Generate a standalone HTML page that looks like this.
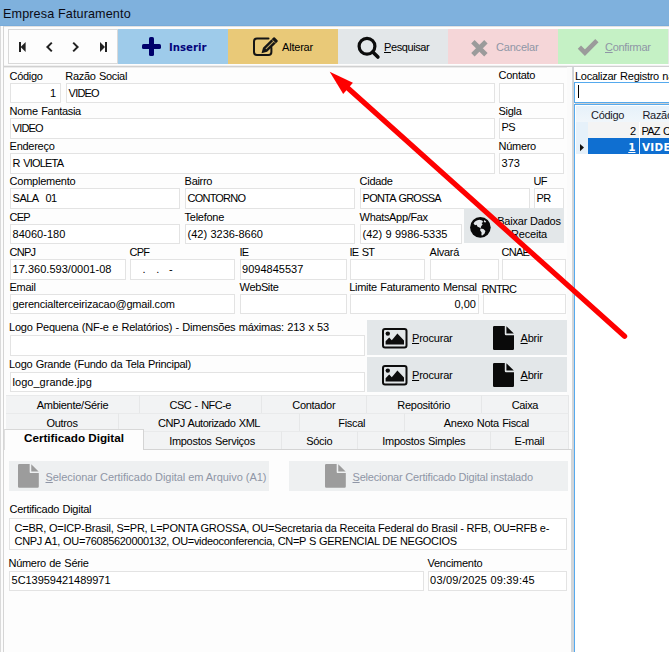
<!DOCTYPE html>
<html><head><meta charset="utf-8"><title>Empresa Faturamento</title>
<style>
*{box-sizing:border-box;margin:0;padding:0}
html,body{width:669px;height:652px;overflow:hidden;background:#fdfdfd}
body{position:relative;font-family:"Liberation Sans",sans-serif;font-size:11px;color:#000;letter-spacing:-0.2px}
.a{position:absolute}
.l{position:absolute;white-space:nowrap;line-height:13px;height:13px}
.i{position:absolute;height:20.5px;background:#fff;border:1px solid #e3e3e3;white-space:nowrap;line-height:15px;padding:1px 0 0 1.6px;overflow:hidden}
.btn{position:absolute;top:29px;height:35px;width:110px}
.bt{position:absolute;white-space:nowrap;line-height:13px;top:41px}
.t{position:absolute;white-space:nowrap;height:18.4px;line-height:18px;text-align:center;border-right:1px solid #e6e7e8;border-top:1px solid #e9eaeb;background:#f2f3f4}
u{text-decoration-thickness:1px;text-underline-offset:1px}
svg{position:absolute;overflow:visible}
</style></head><body>

<div class="a" style="left:0;top:0;width:669px;height:26px;background:#7fb1dd"></div>
<div class="l" style="left:3px;top:7px;font-size:12.6px;line-height:15px;height:15px;letter-spacing:0.13px;color:#0a0a14">Empresa Faturamento</div>
<div class="a" style="left:0;top:26px;width:5px;height:626px;background:linear-gradient(90deg,#dadada 0,#dadada 1px,#fcfcfc 1px,#fcfcfc 3px,#d5d5d5 3px,#d5d5d5 4px,#f2f2f2 4px,#f2f2f2 4.4px,#fdfdfd 4.4px)"></div>
<div class="a" style="left:4px;top:26px;width:665px;height:40px;background:#fdfdfd"></div>
<div class="a" style="left:8px;top:29px;width:110px;height:35px;background:#fdfdfd;border:1px solid #d9d9d9"></div>
<div class="btn" style="left:118px;background:#9ecbea"></div>
<div class="btn" style="left:228px;background:#e9c978"></div>
<div class="btn" style="left:338px;background:#e3e7e9"></div>
<div class="btn" style="left:448px;background:#f5d6d8"></div>
<div class="btn" style="left:558px;width:110px;background:#c5f1c5"></div>
<div class="a" style="left:668px;top:29px;width:1px;height:35px;background:#e6e6e6"></div>
<div class="a" style="left:0;top:25px;width:669px;height:1px;background:#78abd9"></div>
<div class="a" style="left:4px;top:26px;width:665px;height:1px;background:#e2e2e2"></div>
<div class="a" style="left:4px;top:65px;width:665px;height:3px;background:linear-gradient(#f0f0f0 0,#f0f0f0 1px,#d0d0d0 1px,#d0d0d0 2px,#ebebeb 2px)"></div>
<svg style="left:0;top:0" width="669" height="70" viewBox="0 0 669 70"><g fill="#222"><rect x="19" y="42" width="2" height="10"/><path d="M25.6 42v10l-5-5z"/><rect x="105" y="42" width="2" height="10"/><path d="M100 42v10l5-5z"/></g><g fill="none" stroke="#222" stroke-width="2"><path d="M51.8 42.6l-4.4 4.4 4.4 4.4"/><path d="M73.2 42.6l4.4 4.4-4.4 4.4"/></g><rect x="149" y="37" width="5" height="19" rx="1.6" fill="#00006b"/><rect x="142" y="44" width="19" height="5" rx="1.6" fill="#00006b"/><path d="M268.5 38.5h-11.5a3 3 0 0 0-3 3v10.5a3 3 0 0 0 3 3h11.4a3 3 0 0 0 3-3v-4.2" fill="none" stroke="#151515" stroke-width="2" stroke-linecap="round"/><path d="M261.5 53.3L263 47.7 273.4 37.6a1 1 0 0 1 1.4 0L277.5 40.3a1 1 0 0 1 0 1.4L267.1 51.8z" fill="#151515"/><path d="M265.9 48.9L273.9 41.1" stroke="#e9c978" stroke-width="1.1" opacity="0.8" fill="none"/><path d="M271.5 39.2L276 43.7" stroke="#e9c978" stroke-width="0.7" opacity="0.8" fill="none"/><circle cx="367" cy="46.2" r="7.9" fill="none" stroke="#0c0c0c" stroke-width="3.2"/><path d="M372.8 52l5.1 5.1" stroke="#0c0c0c" stroke-width="3.6" stroke-linecap="round"/><path d="M472.9 41.7l13 13M485.9 41.7l-13 13" stroke="#9b9b9b" stroke-width="4.8" stroke-linecap="butt"/><path d="M579.4 47.2l5.5 5.5 12-12" stroke="#9b9b9b" stroke-width="4.6" fill="none" stroke-linejoin="miter"/></svg>
<div class="bt" style="left:169px;font-family:'DejaVu Sans',sans-serif;font-weight:bold;font-size:10.2px;color:#04047c;letter-spacing:0">Inserir</div>
<div class="bt" style="left:282px">Alterar</div>
<div class="bt" style="left:384px;letter-spacing:-0.4px"><u>P</u>esquisar</div>
<div class="bt" style="left:496px;color:#8f96a6">Cancelar</div>
<div class="bt" style="left:605px;color:#8f96a6;letter-spacing:-0.3px"><u>C</u>onfirmar</div>
<div class="a" style="left:567px;top:67px;width:5px;height:585px;background:#fbfbfb"></div>
<div class="a" style="left:572px;top:67px;width:1px;height:585px;background:#d3d6d9"></div>
<div class="a" style="left:573px;top:67px;width:1px;height:585px;background:#d0d3d7"></div>
<div class="a" style="left:571px;top:449px;width:1px;height:203px;background:#d2d6d9"></div>
<div class="l" style="left:9.6px;top:69.5px;letter-spacing:-0.30px;">Código</div>
<div class="l" style="left:65.3px;top:69.5px;letter-spacing:-0.31px;word-spacing:0.66px;">Razão Social</div>
<div class="l" style="left:498.6px;top:68.5px;letter-spacing:-0.29px;">Contato</div>
<div class="i" style="left:10px;top:82.8px;width:51px;"></div>
<div class="l" style="left:10px;top:86.7px;width:46px;text-align:right;letter-spacing:0.00px;">1</div>
<div class="i" style="left:66px;top:82.8px;width:429px;"></div>
<div class="l" style="left:68.6px;top:86.7px;letter-spacing:-0.80px;">VIDEO</div>
<div class="i" style="left:499px;top:82.8px;width:65px;"></div>
<div class="l" style="left:9.6px;top:105px;letter-spacing:-0.30px;word-spacing:0.65px;">Nome Fantasia</div>
<div class="l" style="left:498.6px;top:105px;letter-spacing:-0.32px;">Sigla</div>
<div class="i" style="left:10px;top:118.05px;width:485px;"></div>
<div class="l" style="left:12.6px;top:121.7px;letter-spacing:-0.80px;">VIDEO</div>
<div class="i" style="left:499px;top:118.05px;width:65px;"></div>
<div class="l" style="left:501.6px;top:120.7px;letter-spacing:-0.80px;">PS</div>
<div class="l" style="left:9.6px;top:140.3px;letter-spacing:-0.27px;">Endereço</div>
<div class="l" style="left:498.6px;top:140.3px;letter-spacing:-0.30px;">Número</div>
<div class="i" style="left:10px;top:153.3px;width:485px;"></div>
<div class="l" style="left:12.6px;top:156.7px;letter-spacing:-0.80px;word-spacing:1.15px;">R VIOLETA</div>
<div class="i" style="left:499px;top:153.3px;width:65px;"></div>
<div class="l" style="left:501.6px;top:156.7px;letter-spacing:0.00px;">373</div>
<div class="l" style="left:9.6px;top:174.6px;letter-spacing:-0.25px;">Complemento</div>
<div class="l" style="left:184.6px;top:174.6px;letter-spacing:-0.30px;">Bairro</div>
<div class="l" style="left:359.6px;top:174.6px;letter-spacing:-0.30px;">Cidade</div>
<div class="l" style="left:533.6px;top:174.6px;letter-spacing:-0.80px;">UF</div>
<div class="i" style="left:10px;top:188.15px;width:170px;"></div>
<div class="l" style="left:12.6px;top:191.7px;letter-spacing:-0.53px;word-spacing:0.88px;">SALA&nbsp; 01</div>
<div class="i" style="left:185px;top:188.15px;width:170px;"></div>
<div class="l" style="left:187.6px;top:191.7px;letter-spacing:-0.80px;">CONTORNO</div>
<div class="i" style="left:360px;top:188.15px;width:170px;"></div>
<div class="l" style="left:362.6px;top:191.7px;letter-spacing:-0.80px;word-spacing:1.15px;">PONTA GROSSA</div>
<div class="i" style="left:534px;top:188.15px;width:30px;"></div>
<div class="l" style="left:536.6px;top:191.7px;letter-spacing:-0.80px;">PR</div>
<div class="l" style="left:9.6px;top:211px;letter-spacing:-0.80px;">CEP</div>
<div class="l" style="left:184.6px;top:211px;letter-spacing:-0.27px;">Telefone</div>
<div class="l" style="left:359.6px;top:211px;letter-spacing:-0.33px;">WhatsApp/Fax</div>
<div class="i" style="left:10px;top:223.9px;width:170px;"></div>
<div class="l" style="left:12.6px;top:227.7px;letter-spacing:0.01px;">84060-180</div>
<div class="i" style="left:185px;top:223.9px;width:170px;"></div>
<div class="l" style="left:187.6px;top:227.7px;letter-spacing:-0.02px;word-spacing:0.37px;">(42) 3236-8660</div>
<div class="i" style="left:360px;top:223.9px;width:102px;"></div>
<div class="l" style="left:362.6px;top:227.7px;letter-spacing:-0.02px;word-spacing:0.37px;">(42) 9 9986-5335</div>
<div class="a" style="left:464px;top:208.4px;width:100px;height:35px;background:#e3e7e9"></div>
<svg style="left:470px;top:216.8px" width="20.8" height="20.8" viewBox="0 0 20.8 20.8"><circle cx="10.4" cy="10.4" r="10.3" fill="#0a0a0a"/><path d="M3.6 6.4C4.6 4.4 6.6 3.2 9.4 2.8l2.8.6 1 1.6-1.6 1 1 1.6-1.4 1.6-.6 2-1.6-1-1.4-.4-1-2-1.6.4z" fill="#e3e7e9"/><path d="M10.4 11.6l3 .4 2 2-.8 2.6-2.2 2-1-.4.2-2.6-1.4-2z" fill="#e3e7e9"/><path d="M14.2 3l2 1.4-.8 1.2-1.6-.6z" fill="#e3e7e9"/></svg>
<div class="l" style="left:493px;top:215px;width:72px;text-align:center">Baixar Dados</div>
<div class="l" style="left:493px;top:228px;width:72px;text-align:center">Receita</div>
<div class="l" style="left:9.6px;top:246px;letter-spacing:-0.80px;">CNPJ</div>
<div class="l" style="left:129.6px;top:246px;letter-spacing:-0.80px;">CPF</div>
<div class="l" style="left:239.6px;top:246px;letter-spacing:-0.80px;">IE</div>
<div class="l" style="left:349.6px;top:246px;letter-spacing:-0.80px;word-spacing:1.15px;">IE ST</div>
<div class="l" style="left:429.6px;top:246px;letter-spacing:-0.30px;">Alvará</div>
<div class="l" style="left:501.6px;top:246px;letter-spacing:-0.80px;">CNAE</div>
<div class="i" style="left:10px;top:259.0px;width:116px;"></div>
<div class="l" style="left:12.6px;top:262.7px;letter-spacing:0.02px;">17.360.593/0001-08</div>
<div class="i" style="left:130px;top:259.0px;width:105px;"></div>
<div class="l" style="left:142.6px;top:262.7px;letter-spacing:0.10px;">.</div>
<div class="l" style="left:156.2px;top:262.7px;letter-spacing:0.10px;">.</div>
<div class="l" style="left:169px;top:262.7px;letter-spacing:0.10px;">-</div>
<div class="i" style="left:239.5px;top:259.0px;width:107px;"></div>
<div class="l" style="left:242.1px;top:262.7px;letter-spacing:0.00px;">9094845537</div>
<div class="i" style="left:350px;top:259.0px;width:75px;"></div>
<div class="i" style="left:429.5px;top:259.0px;width:69px;"></div>
<div class="i" style="left:502px;top:259.0px;width:64px;"></div>
<div class="l" style="left:9.6px;top:281.3px;letter-spacing:-0.32px;">Email</div>
<div class="l" style="left:239.6px;top:281.3px;letter-spacing:-0.37px;">WebSite</div>
<div class="l" style="left:349.2px;top:281.3px;letter-spacing:-0.28px;word-spacing:0.63px;">Limite Faturamento Mensal</div>
<div class="l" style="left:481.6px;top:282.6px;letter-spacing:-0.80px;">RNTRC</div>
<div class="i" style="left:10px;top:293.9px;width:225px;"></div>
<div class="l" style="left:12.6px;top:297.7px;letter-spacing:-0.19px;">gerencialterceirizacao@gmail.com</div>
<div class="i" style="left:239.5px;top:293.9px;width:107px;"></div>
<div class="i" style="left:350px;top:293.9px;width:129px;"></div>
<div class="l" style="left:350px;top:297.7px;width:126px;text-align:right;letter-spacing:0.03px;">0,00</div>
<div class="i" style="left:482.5px;top:293.9px;width:83.5px;"></div>
<div class="l" style="left:9px;top:321px;letter-spacing:-0.23px;word-spacing:0.58px;">Logo Pequena (NF-e e Relatórios) - Dimensões máximas: 213 x 53</div>
<div class="i" style="left:10px;top:335.3px;width:355px;height:20.3px"></div>
<div class="l" style="left:9px;top:358px;letter-spacing:-0.29px;word-spacing:0.64px;">Logo Grande (Fundo da Tela Principal)</div>
<div class="i" style="left:10px;top:372.2px;width:355px;height:20.3px"></div>
<div class="l" style="left:12.6px;top:376.3px;letter-spacing:0.02px">logo_grande.jpg</div>
<div class="a" style="left:367px;top:320px;width:200px;height:35px;background:#e3e7e9"></div>
<svg style="left:382px;top:328px" width="26" height="21" viewBox="0 0 26 21"><rect x="1" y="1" width="23.5" height="18.5" rx="2" fill="none" stroke="#0d0d0d" stroke-width="2"/><circle cx="5.8" cy="5.6" r="2.2" fill="#0d0d0d"/><path d="M3.6 16.4v-3.2l3.6-3.6 2.6 2.6 5.6-6.6 6.6 6.8v4z" fill="#0d0d0d"/></svg>
<svg style="left:493px;top:326px" width="21" height="24" viewBox="0 0 21 24"><path d="M0 1.2a1.2 1.2 0 0 1 1.2-1.2h10.6v8a1.2 1.2 0 0 0 1.2 1.2h8v13.6a1.2 1.2 0 0 1-1.2 1.2h-18.6a1.2 1.2 0 0 1-1.2-1.2z" fill="#0a0a0a"/><path d="M13.4 0.2l7.4 7.4h-7.4z" fill="#0a0a0a"/></svg>
<div class="l" style="left:412px;top:332px"><u>P</u>rocurar</div>
<div class="l" style="left:520.5px;top:332px"><u>A</u>brir</div>
<div class="a" style="left:367px;top:357px;width:200px;height:35px;background:#e3e7e9"></div>
<svg style="left:382px;top:365px" width="26" height="21" viewBox="0 0 26 21"><rect x="1" y="1" width="23.5" height="18.5" rx="2" fill="none" stroke="#0d0d0d" stroke-width="2"/><circle cx="5.8" cy="5.6" r="2.2" fill="#0d0d0d"/><path d="M3.6 16.4v-3.2l3.6-3.6 2.6 2.6 5.6-6.6 6.6 6.8v4z" fill="#0d0d0d"/></svg>
<svg style="left:493px;top:363px" width="21" height="24" viewBox="0 0 21 24"><path d="M0 1.2a1.2 1.2 0 0 1 1.2-1.2h10.6v8a1.2 1.2 0 0 0 1.2 1.2h8v13.6a1.2 1.2 0 0 1-1.2 1.2h-18.6a1.2 1.2 0 0 1-1.2-1.2z" fill="#0a0a0a"/><path d="M13.4 0.2l7.4 7.4h-7.4z" fill="#0a0a0a"/></svg>
<div class="l" style="left:412px;top:369px"><u>P</u>rocurar</div>
<div class="l" style="left:520.5px;top:369px"><u>A</u>brir</div>
<div class="a" style="left:6px;top:395.1px;width:563.3px;height:54px;background:#f2f3f4"></div>
<div class="t" style="left:6px;top:395.1px;width:134px;letter-spacing:-0.26px;">Ambiente/Série</div>
<div class="t" style="left:140px;top:395.1px;width:121.5px;letter-spacing:-0.53px;word-spacing:0.88px;">CSC - NFC-e</div>
<div class="t" style="left:261.5px;top:395.1px;width:105.5px;letter-spacing:-0.27px;">Contador</div>
<div class="t" style="left:367px;top:395.1px;width:114.5px;letter-spacing:-0.25px;">Repositório</div>
<div class="t" style="left:481.5px;top:395.1px;width:87.79999999999995px;letter-spacing:-0.32px;">Caixa</div>
<div class="t" style="left:6px;top:413.3px;width:113px;letter-spacing:-0.30px;">Outros</div>
<div class="t" style="left:119px;top:413.3px;width:181px;letter-spacing:-0.48px;word-spacing:0.83px;">CNPJ Autorizado XML</div>
<div class="t" style="left:300px;top:413.3px;width:104.5px;letter-spacing:-0.30px;">Fiscal</div>
<div class="t" style="left:404.5px;top:413.3px;width:164.79999999999995px;letter-spacing:-0.32px;word-spacing:0.67px;">Anexo Nota Fiscal</div>
<div class="t" style="left:143.5px;top:431.0px;width:138.0px;letter-spacing:-0.28px;word-spacing:0.62px;">Impostos Serviços</div>
<div class="t" style="left:281.5px;top:431.0px;width:76.5px;letter-spacing:-0.32px;">Sócio</div>
<div class="t" style="left:358px;top:431.0px;width:132.5px;letter-spacing:-0.28px;word-spacing:0.63px;">Impostos Simples</div>
<div class="t" style="left:490.5px;top:431.0px;width:78.79999999999995px;letter-spacing:-0.25px;">E-mail</div>
<div class="a" style="left:4px;top:448.8px;width:567px;height:204px;background:#fdfdfd;border-top:1px solid #d4d4d4"></div>
<div class="a" style="left:4px;top:429px;width:140px;height:21px;background:#fdfdfd;border-top:1px solid #d8d8d8;border-right:1px solid #d4d4d4;border-left:1px solid #e0e0e0;text-align:center;font-weight:bold;font-size:11.7px;line-height:15px;letter-spacing:0;white-space:nowrap">Certificado Digital</div>
<div class="a" style="left:9px;top:461px;width:260px;height:30px;background:#eef0f1"></div>
<div class="a" style="left:289px;top:461px;width:279px;height:30px;background:#eef0f1"></div>
<svg style="left:17.5px;top:464.2px" width="20.8" height="23.7" viewBox="0 0 21 24" preserveAspectRatio="none"><path d="M0 1.2a1.2 1.2 0 0 1 1.2-1.2h10.6v8a1.2 1.2 0 0 0 1.2 1.2h8v13.6a1.2 1.2 0 0 1-1.2 1.2h-18.6a1.2 1.2 0 0 1-1.2-1.2z" fill="#9c9c9c"/><path d="M13.4 0.2l7.4 7.4h-7.4z" fill="#9c9c9c"/></svg>
<svg style="left:325px;top:464.2px" width="20.8" height="23.7" viewBox="0 0 21 24" preserveAspectRatio="none"><path d="M0 1.2a1.2 1.2 0 0 1 1.2-1.2h10.6v8a1.2 1.2 0 0 0 1.2 1.2h8v13.6a1.2 1.2 0 0 1-1.2 1.2h-18.6a1.2 1.2 0 0 1-1.2-1.2z" fill="#9c9c9c"/><path d="M13.4 0.2l7.4 7.4h-7.4z" fill="#9c9c9c"/></svg>
<div class="l" style="left:45.5px;top:471px;color:#8f96a6;letter-spacing:-0.05px"><u>S</u>elecionar Certificado Digital em Arquivo (A1)</div>
<div class="l" style="left:352.5px;top:471px;color:#8f96a6"><u>S</u>elecionar Certificado Digital instalado</div>
<div class="l" style="left:9.5px;top:503px;letter-spacing:-0.27px;word-spacing:0.62px;">Certificado Digital</div>
<div class="i" style="left:9px;top:518px;width:558px;height:32px"></div>
<div class="l" style="left:14.6px;top:521.7px;letter-spacing:-0.225px">C=BR, O=ICP-Brasil, S=PR, L=PONTA GROSSA, OU=Secretaria da Receita Federal do Brasil - RFB, OU=RFB e-</div>
<div class="l" style="left:14.6px;top:534.7px;letter-spacing:-0.32px;word-spacing:0.3px">CNPJ A1, OU=76085620000132, OU=videoconferencia, CN=P S GERENCIAL DE NEGOCIOS</div>
<div class="l" style="left:8.5px;top:557px;letter-spacing:-0.29px;word-spacing:0.64px;">Número de Série</div>
<div class="l" style="left:427.5px;top:557px;letter-spacing:-0.26px;">Vencimento</div>
<div class="i" style="left:9px;top:570.5px;width:415px;height:20px"></div>
<div class="l" style="left:11.6px;top:573.8px;letter-spacing:-0.05px;">5C13959421489971</div>
<div class="i" style="left:427.5px;top:570.5px;width:139.5px;height:20px"></div>
<div class="l" style="left:430.1px;top:573.8px;letter-spacing:0.2px">03/09/2025 09:39:45</div>
<div class="a" style="left:574px;top:67px;width:95px;height:585px;background:#fff"></div>
<div class="l" style="left:575px;top:70px;letter-spacing:-0.26px;word-spacing:0.61px;">Localizar Registro na</div>
<div class="a" style="left:574px;top:82px;width:100px;height:21px;background:#fff;border:1px solid #55aaee"></div>
<div class="a" style="left:578px;top:85px;width:1px;height:13px;background:#000"></div>
<div class="a" style="left:575px;top:103px;width:94px;height:1px;background:#d0d0d0"></div>
<div class="a" style="left:574px;top:104px;width:100px;height:560px;background:#fff;border:1px solid #55aaee"></div>
<div class="a" style="left:576px;top:106px;width:93px;height:16px;background:linear-gradient(#e6f1fa,#f0f6fb)"></div>
<div class="a" style="left:576px;top:122px;width:12px;height:32px;background:#e6f1fa"></div>
<div class="a" style="left:588px;top:122px;width:81px;height:16px;background:#f4f4f4"></div>
<div class="a" style="left:639px;top:122px;width:1px;height:16px;background:#fff"></div>
<div class="a" style="left:588px;top:138px;width:81px;height:16px;background:#0f6fd1"></div>
<div class="a" style="left:639px;top:138px;width:1px;height:16px;background:#e8f0fa"></div>
<div class="l" style="left:591px;top:108.5px;letter-spacing:-0.30px;color:#1a1a2a">Código</div>
<div class="l" style="left:642.5px;top:108.5px;letter-spacing:-0.32px;color:#1a1a2a">Razão</div>
<div class="l" style="left:600px;top:124.5px;width:36px;text-align:right">2</div>
<div class="l" style="left:641.5px;top:124.5px;letter-spacing:-0.80px;word-spacing:1.15px;">PAZ C</div>
<div class="l" style="left:600px;top:140.5px;width:35.5px;text-align:right;color:#fff;font-weight:bold;font-family:'DejaVu Sans',sans-serif;font-size:10.4px;letter-spacing:0"><u>1</u></div>
<div class="l" style="left:642px;top:140.5px;color:#fff;font-weight:bold;font-family:'DejaVu Sans',sans-serif;font-size:10.4px;letter-spacing:0.3px">VIDEO</div>
<svg style="left:580px;top:144px" width="5" height="8" viewBox="0 0 5 8"><path d="M0 0l4 3.6-4 3.6z" fill="#111"/></svg>
<svg style="left:0;top:0" width="669" height="652" viewBox="0 0 669 652"><path d="M624.6 336.2L345 85.5" stroke="#fe0000" stroke-width="5.2" stroke-linecap="round"/><path d="M329.7 71.7L352.9 82.7 343.2 94.1z" fill="#fe0000"/></svg>
</body></html>
